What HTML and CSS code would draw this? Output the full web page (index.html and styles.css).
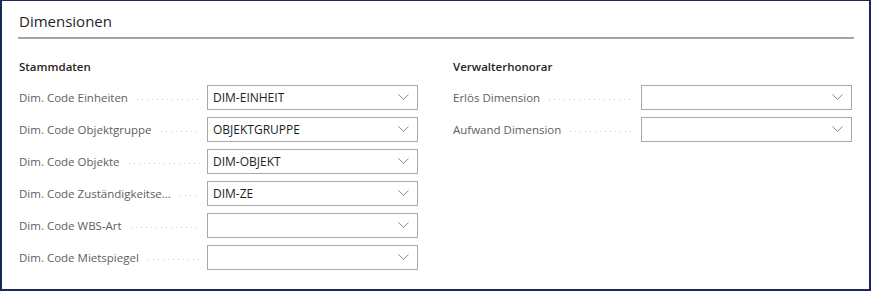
FILE: index.html
```html
<!DOCTYPE html>
<html lang="de">
<head>
    <meta charset="UTF-8">
    <meta name="viewport" content="width=device-width, initial-scale=1.0">
    <title>Dimensionen</title>
    <link rel="stylesheet" href="styles.css">
</head>
<body>
    <div class="frame">
        <div class="section-title">Dimensionen</div>

        <div class="columns">
            <div class="group">
                <div class="group-title">Stammdaten</div>
                <div class="field">
                    <span class="label">Dim. Code Einheiten</span>
                    <div class="select"><span class="value">DIM-EINHEIT</span><svg class="chev" width="11" height="6" viewBox="0 0 11 6"><path d="M0.5 0.5 L5.5 5.3 L10.5 0.5" /></svg></div>
                </div>
                <div class="field">
                    <span class="label">Dim. Code Objektgruppe</span>
                    <div class="select"><span class="value">OBJEKTGRUPPE</span><svg class="chev" width="11" height="6" viewBox="0 0 11 6"><path d="M0.5 0.5 L5.5 5.3 L10.5 0.5" /></svg></div>
                </div>
                <div class="field">
                    <span class="label">Dim. Code Objekte</span>
                    <div class="select"><span class="value">DIM-OBJEKT</span><svg class="chev" width="11" height="6" viewBox="0 0 11 6"><path d="M0.5 0.5 L5.5 5.3 L10.5 0.5" /></svg></div>
                </div>
                <div class="field">
                    <span class="label">Dim. Code Zuständigkeitse...</span>
                    <div class="select"><span class="value">DIM-ZE</span><svg class="chev" width="11" height="6" viewBox="0 0 11 6"><path d="M0.5 0.5 L5.5 5.3 L10.5 0.5" /></svg></div>
                </div>
                <div class="field">
                    <span class="label">Dim. Code WBS-Art</span>
                    <div class="select"><span class="value"></span><svg class="chev" width="11" height="6" viewBox="0 0 11 6"><path d="M0.5 0.5 L5.5 5.3 L10.5 0.5" /></svg></div>
                </div>
                <div class="field">
                    <span class="label">Dim. Code Mietspiegel</span>
                    <div class="select"><span class="value"></span><svg class="chev" width="11" height="6" viewBox="0 0 11 6"><path d="M0.5 0.5 L5.5 5.3 L10.5 0.5" /></svg></div>
                </div>
            </div>

            <div class="group">
                <div class="group-title">Verwalterhonorar</div>
                <div class="field">
                    <span class="label">Erlös Dimension</span>
                    <div class="select"><span class="value"></span><svg class="chev" width="11" height="6" viewBox="0 0 11 6"><path d="M0.5 0.5 L5.5 5.3 L10.5 0.5" /></svg></div>
                </div>
                <div class="field">
                    <span class="label">Aufwand Dimension</span>
                    <div class="select"><span class="value"></span><svg class="chev" width="11" height="6" viewBox="0 0 11 6"><path d="M0.5 0.5 L5.5 5.3 L10.5 0.5" /></svg></div>
                </div>
            </div>
        </div>
    </div>
</body>
</html>
```

FILE: styles.css
```css
* {
    padding: 0;
    margin: 0;
    box-sizing: border-box;
}
body {
    background-color: #fff;
    font-family: "Open Sans", "Noto Sans", sans-serif;
}
.frame {
    width: 871px;
    height: 291px;
    border: 2px solid #1b2a55;
    border-top-width: 1px;
    padding: 9px 15px 0 16px;
    background-color: #fff;
}
.section-title {
    font-size: 15px;
    color: #1f1f1f;
    line-height: 22px;
    padding-left: 1px;
    padding-bottom: 5px;
    border-bottom: 2px solid #a3a3a3;
}
.columns {
    display: flex;
    gap: 35px;
    padding-left: 1px;
    margin-top: 20px;
}
.group {
    width: 399px;
    display: flex;
    flex-direction: column;
}
.group-title {
    font-size: 11.5px;
    font-weight: 600;
    color: #262626;
    line-height: 16px;
    margin-bottom: 10px;
}
.field {
    display: flex;
    align-items: center;
    height: 24px;
    margin-bottom: 8px;
}
.label {
    flex: 0 0 188px;
    display: flex;
    align-items: center;
    font-size: 11.5px;
    color: #606060;
    white-space: nowrap;
    padding-right: 7px;
}
.label::after {
    content: '';
    flex: 1;
    height: 1px;
    margin-left: 9px;
    margin-top: 4px;
    background-image: linear-gradient(to right, #c4c4c4 1px, transparent 1px);
    background-size: 5px 1px;
    background-repeat: repeat-x;
}
.select {
    flex: 1;
    height: 25px;
    border: 1px solid #a8a8a8;
    display: flex;
    align-items: center;
    justify-content: space-between;
    padding: 0 8px 0 5px;
}
.value {
    font-size: 12px;
    color: #1e1e1e;
}
.chev {
    fill: none;
    stroke: #8a8a8a;
    stroke-width: 1;
}
```
